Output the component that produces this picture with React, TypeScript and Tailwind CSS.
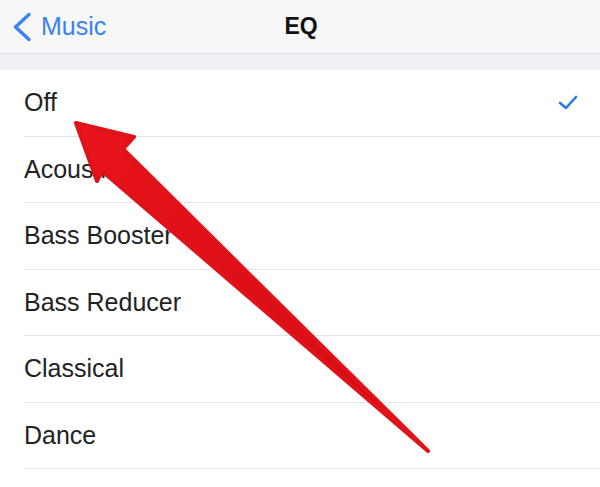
export default function App() {
  const items = ["Off", "Acoustic", "Bass Booster", "Bass Reducer", "Classical", "Dance"];

  return (
    <div className="relative w-[600px] h-[487px] overflow-hidden bg-white font-['Liberation_Sans',Arial,sans-serif]">
      <header className="h-[54px] bg-[#f7f7f8] border-b border-[#dcdce0] flex items-center relative">
        <div className="flex items-center pl-[12px] text-[#3a82f0]">
          <svg width="20" height="30" viewBox="0 0 20 30" className="mr-[9px]">
            <path d="M17 2.5 L3.5 15 L17 27.5" fill="none" stroke="currentColor" strokeWidth="3.4" strokeLinecap="round" strokeLinejoin="round" />
          </svg>
          <span className="text-[25px] leading-none">Music</span>
        </div>
        <div className="absolute left-[241px] w-[120px] text-center text-[23px] font-bold text-[#111] pointer-events-none">EQ</div>
      </header>
      <div className="h-[16px] bg-[#efeff4]" />
      <ul className="bg-white">
        {items.map((item, i) => (
          <li key={item} className="h-[66.5px] pl-[24px] flex">
            <div className="flex-1 flex items-center justify-between pr-[22px] border-b border-[#e4e4e8] text-[25px] text-[#222]">
              <span>{item}</span>
              {i === 0 && (
                <svg width="20" height="16" viewBox="0 0 20 16">
                  <path d="M2 8 L8 13 L18 2" fill="none" stroke="#2a78e8" strokeWidth="2.6" strokeLinecap="round" strokeLinejoin="round" />
                </svg>
              )}
            </div>
          </li>
        ))}
      </ul>
      <svg className="absolute left-0 top-0 pointer-events-none" width="600" height="487" viewBox="0 0 600 487">
        <defs>
          <linearGradient id="arr" x1="0" y1="0" x2="1" y2="1">
            <stop offset="0" stopColor="#e8141c" />
            <stop offset="1" stopColor="#d40a12" />
          </linearGradient>
        </defs>
        <polygon
          points="76,123 134,137 123,149 428,451 102,171 97,181"
          fill="url(#arr)"
          stroke="#e0121a"
          strokeWidth="4"
          strokeLinejoin="round"
        />
      </svg>
    </div>
  );
}
